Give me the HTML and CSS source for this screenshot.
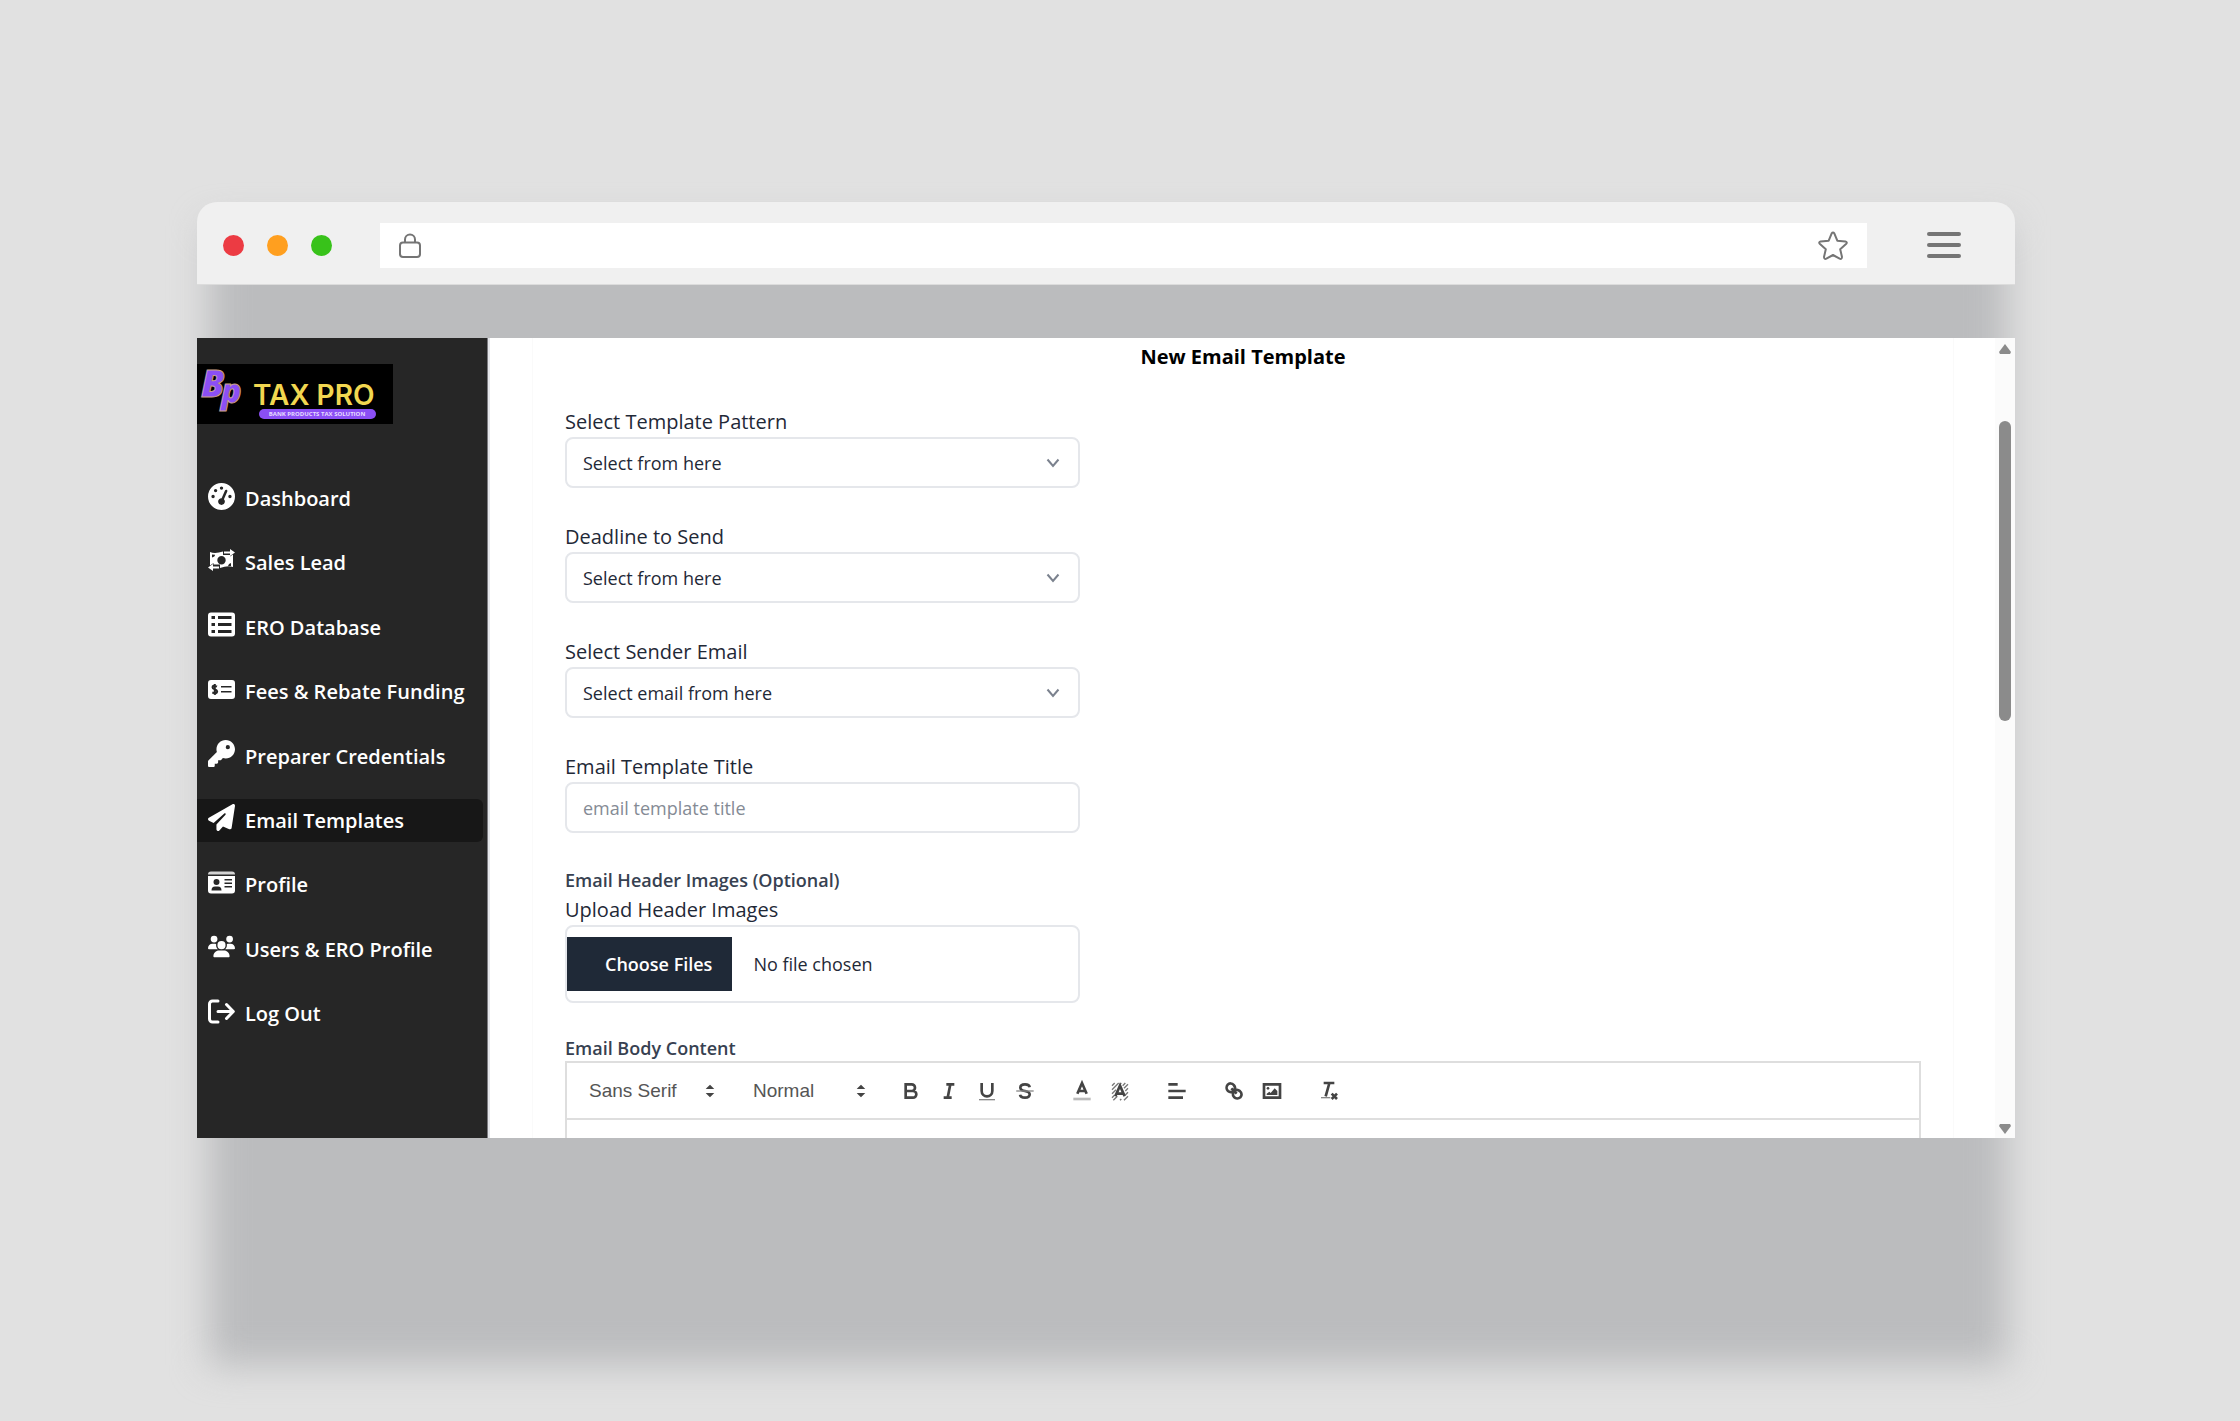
FILE: index.html
```html
<!DOCTYPE html>
<html lang="en">
<head>
<meta charset="utf-8">
<meta name="viewport" content="width=device-width, initial-scale=1">
<title>New Email Template</title>
<link rel="stylesheet" href="styles.css">
</head>
<body>
<div class="window">
  <header class="chrome">
    <div class="lights"><span class="light red"></span><span class="light amber"></span><span class="light green"></span></div>
    <div class="address">
      <svg class="lock" viewBox="0 0 22 25" aria-hidden="true"><path d="M6 9.500V6.500a5 5 0 0 1 10 0V9.500M4 9.500H18a3 3 0 0 1 3 3V21a3 3 0 0 1-3 3H4a3 3 0 0 1-3-3V12.500a3 3 0 0 1 3-3Z"/></svg>
      <input class="url" type="text" aria-label="Address">
      <button class="plain" type="button" aria-label="Bookmark"><svg class="star" viewBox="0 0 30 29"><path d="M13.700 2.300Q15 .5 16.300 2.300L19.300 9.700L27.400 10.400Q29.800 11.200 28 13L22.200 18.200L24 26Q23.800 28.600 21.600 27.600L15 24L8.400 27.600Q6.200 28.600 6 26L7.800 18.200L2 13Q.2 11.200 2.600 10.400L10.700 9.700Z"/></svg></button>
    </div>
    <button class="plain menu" type="button" aria-label="Menu"><span></span><span></span><span></span></button>
  </header>

  <div class="app">
    <aside class="sidebar">
      <svg class="logo" viewBox="0 0 196 60" role="img" aria-label="BP Tax Pro">
        <rect width="196" height="60" fill="#000"/>
        <text class="logo-mark" x="24" y="39" font-size="34">p</text>
        <text class="logo-mark" x="4" y="33" font-size="37">B</text>
        <text class="logo-name" x="56" y="41">TAX PRO</text>
        <rect x="62" y="45" width="117" height="10" rx="5" fill="#8b4ff5"/>
        <text class="logo-tag" x="120" y="52">BANK PRODUCTS TAX SOLUTION</text>
      </svg>
      <nav class="nav" aria-label="Main">
        <a class="item" href="#"><svg viewBox="0 0 512 512"><path d="M0 256a256 256 0 1 1 512 0A256 256 0 1 1 0 256zM288 96a32 32 0 1 0 -64 0 32 32 0 1 0 64 0zM256 416c35.300 0 64-28.700 64-64c0-17.400-6.900-33.100-18.100-44.600L366 161.700c5.300-12.100-.2-26.300-12.300-31.600s-26.300 .2-31.600 12.300L257.900 288c-.6 0-1.300 0-1.900 0c-35.300 0-64 28.700-64 64s28.700 64 64 64zM176 144a32 32 0 1 0 -64 0 32 32 0 1 0 64 0zM96 288a32 32 0 1 0 0-64 32 32 0 1 0 0 64zm352-32a32 32 0 1 0 -64 0 32 32 0 1 0 64 0z"/></svg>Dashboard</a>
        <a class="item" href="#"><svg viewBox="0 0 27 27"><path fill-rule="evenodd" d="M2 5Q7 7 15 4.500V8H22V9.500L25 7.500V20Q20 18 12 21V17.500H5.500V16L2 18.500ZM13.500 9a4.200 4.200 0 1 0 0 8.400 4.200 4.200 0 0 0 0-8.400ZM4 7.500V10.500Q7 10 7 7.800ZM23 19V16Q20.500 16.500 20 19Z"/><path d="M16 4.500H22V2L27 5.500 22 9V6.500H16ZM11 21.500H5V24L0 20.500 5 17V19.500H11Z"/></svg>Sales Lead</a>
        <a class="item" href="#"><svg viewBox="0 0 27 27"><path fill-rule="evenodd" d="M3 1.500H24a3 3 0 0 1 3 3V22.500a3 3 0 0 1-3 3H3a3 3 0 0 1-3-3V4.500a3 3 0 0 1 3-3ZM3.500 5V8H7V5ZM10 5V8H23.500V5ZM3.500 12V15H7V12ZM10 12V15H23.500V12ZM3.500 19V22H7V19ZM10 19V22H23.500V19Z"/></svg>ERO Database</a>
        <a class="item" href="#"><svg viewBox="0 0 27 27"><path fill-rule="evenodd" d="M3 4H24a3 3 0 0 1 3 3V20a3 3 0 0 1-3 3H3a3 3 0 0 1-3-3V7a3 3 0 0 1 3-3ZM13 10V11.500H23.500V10ZM13 15V16.500H23.500V15Z"/><path class="cut" d="M9 10.500Q4.500 8.500 4.500 11.200C4.500 13.500 9.200 13 9.200 15.500Q9 18.300 4.300 16.500M6.800 8V19"/></svg>Fees &amp; Rebate Funding</a>
        <a class="item" href="#"><svg viewBox="0 0 512 512"><path d="M336 352c97.200 0 176-78.800 176-176S433.200 0 336 0S160 78.800 160 176c0 18.700 2.900 36.800 8.300 53.700L7 391c-4.500 4.500-7 10.600-7 17v80c0 13.300 10.700 24 24 24h80c13.300 0 24-10.700 24-24V448h40c13.300 0 24-10.700 24-24V384h40c6.400 0 12.500-2.500 17-7l33.300-33.300c16.900 5.400 35 8.300 53.700 8.300zM376 96a40 40 0 1 1 0 80 40 40 0 1 1 0-80z"/></svg>Preparer Credentials</a>
        <a class="item active" href="#" aria-current="page"><svg viewBox="0 0 512 512"><path d="M498.100 5.600c10.100 7 15.400 19.100 13.500 31.200l-64 416c-1.500 9.700-7.400 18.200-16 23s-18.900 5.400-28 1.600L284 427.700l-68.500 74.100c-8.900 9.700-22.900 12.900-35.200 8.100S160 493.200 160 480V396.400c0-4 1.500-7.800 4.200-10.700L331.800 202.800c5.800-6.300 5.600-16-.4-22s-15.700-6.400-22-.7L106 360.800 17.700 316.600C7.100 311.300 .3 300.700 0 288.900s5.900-22.800 16.100-28.700l448-256c10.700-6.100 23.900-5.500 34 1.400z"/></svg>Email Templates</a>
        <a class="item" href="#"><svg viewBox="0 0 27 27"><path opacity=".8" d="M0 5.500Q0 2.500 3 2.500H24Q27 2.500 27 5.500Z"/><path fill-rule="evenodd" d="M0 7H27V21.500a3 3 0 0 1-3 3H3a3 3 0 0 1-3-3ZM8.500 10a3 3 0 1 0 0 6 3 3 0 0 0 0-6ZM3.500 21.500H13.500Q13.500 17.500 10 17.500H7Q3.500 17.500 3.500 21.500ZM16.500 10V11.500H24V10ZM16.500 13.500V15H24V13.500ZM16.500 17V18.500H24V17Z"/></svg>Profile</a>
        <a class="item" href="#"><svg viewBox="0 0 640 512"><path d="M144 0a80 80 0 1 1 0 160A80 80 0 1 1 144 0zM512 0a80 80 0 1 1 0 160A80 80 0 1 1 512 0zM0 298.700C0 239.800 47.800 192 106.700 192h42.700c15.900 0 31 3.500 44.600 9.700c-1.300 7.200-1.900 14.700-1.900 22.300c0 38.200 16.800 72.500 43.300 96H21.300C9.600 320 0 310.400 0 298.700zM405.300 320h-.7c26.600-23.500 43.300-57.800 43.300-96c0-7.600-.7-15-1.900-22.300c13.600-6.300 28.700-9.700 44.600-9.700h42.700C592.200 192 640 239.800 640 298.700c0 11.800-9.600 21.300-21.300 21.300H405.300zM224 224a96 96 0 1 1 192 0 96 96 0 1 1 -192 0zM128 485.300C128 411.700 187.700 352 261.300 352H378.700C452.300 352 512 411.700 512 485.300c0 14.700-11.900 26.700-26.700 26.700H154.700c-14.700 0-26.700-11.900-26.700-26.700z"/></svg>Users &amp; ERO Profile</a>
        <a class="item" href="#"><svg viewBox="0 0 27 27"><path class="line" d="M10 3H4.500A3 3 0 0 0 1.500 6V21A3 3 0 0 0 4.500 24H10M10 13.500H24M18.500 6.500L25.300 13.500 18.500 20.500"/></svg>Log Out</a>
      </nav>
    </aside>

    <main class="main">
      <form class="card">
        <h1>New Email Template</h1>
        <div class="field">
          <label for="pattern">Select Template Pattern</label>
          <div class="pick"><select class="control" id="pattern"><option>Select from here</option></select><svg viewBox="0 0 14 10"><path d="M1.500 1.500L7 8L12.500 1.500"/></svg></div>
        </div>
        <div class="field">
          <label for="deadline">Deadline to Send</label>
          <div class="pick"><select class="control" id="deadline"><option>Select from here</option></select><svg viewBox="0 0 14 10"><path d="M1.500 1.500L7 8L12.500 1.500"/></svg></div>
        </div>
        <div class="field">
          <label for="sender">Select Sender Email</label>
          <div class="pick"><select class="control" id="sender"><option>Select email from here</option></select><svg viewBox="0 0 14 10"><path d="M1.500 1.500L7 8L12.500 1.500"/></svg></div>
        </div>
        <div class="field">
          <label for="title">Email Template Title</label>
          <input class="control" id="title" type="text" placeholder="email template title">
        </div>
        <div class="upload">
          <h2>Email Header Images (Optional)</h2>
          <div class="field">
            <label for="images">Upload Header Images</label>
            <input class="file" id="images" type="file" multiple>
          </div>
        </div>
        <h2>Email Body Content</h2>
        <div class="editor">
          <div class="toolbar" role="toolbar" aria-label="Formatting">
            <div class="fmt font"><select aria-label="Font"><option>Sans Serif</option></select><svg viewBox="0 0 18 18"><path d="M7 11L9 13 11 11ZM7 7L9 5 11 7Z"/></svg></div>
            <div class="fmt size"><select aria-label="Heading"><option>Normal</option></select><svg viewBox="0 0 18 18"><path d="M7 11L9 13 11 11ZM7 7L9 5 11 7Z"/></svg></div>
            <div class="group">
              <button type="button" aria-label="Bold"><svg viewBox="0 0 18 18"><path class="s" d="M5 4H9.500A2.500 2.500 0 0 1 12 6.500 2.500 2.500 0 0 1 9.500 9H5ZM5 9H10.500A2.500 2.500 0 0 1 13 11.500 2.500 2.500 0 0 1 10.500 14H5Z"/></svg></button>
              <button type="button" aria-label="Italic"><svg viewBox="0 0 18 18"><path class="s" d="M7 4H13M5 14H11M8 14L10 4"/></svg></button>
              <button type="button" aria-label="Underline"><svg viewBox="0 0 18 18"><path class="s" d="M5 3V9a4 4 0 0 0 4 4 4 4 0 0 0 4-4V3"/><path class="s t" d="M3 15.500H15"/></svg></button>
              <button type="button" aria-label="Strike"><svg viewBox="0 0 18 18"><path class="s" d="M12.500 6.200C12.300 4.700 11 4 9 4 6.800 4 5.500 5 5.500 6.500 5.500 8 7 8.600 9 9S12.500 10 12.500 11.500C12.500 13 11.200 14 9 14 7 14 5.500 13.300 5.300 11.800"/><path class="s t" d="M2.500 9H15.500"/></svg></button>
            </div>
            <div class="group">
              <button type="button" aria-label="Text colour"><svg viewBox="0 0 18 18"><path class="s" d="M5.500 11L9 3 12.500 11M6.500 9H11.500"/><path class="s bar" d="M2.500 15H15.500"/></svg></button>
              <button type="button" aria-label="Background colour"><svg viewBox="0 0 18 18"><path class="s hatch" d="M3 5L5 3M3 8L8 3M3 11L6 8M3 14L5 12M4 16L7 13M10 3L9 4M13 3L11 5M15 4L12 7M15 7L13 9M15 10L13 12M15 13L12 16M10 15L9 16"/><path class="s" d="M5.500 13L9 5 12.500 13M6.500 11H11.500"/></svg></button>
            </div>
            <div class="group">
              <button type="button" aria-label="Align"><svg viewBox="0 0 18 18"><path class="s" d="M2.500 4H9.500M2.500 9H15.500M2.500 14H13.500"/></svg></button>
            </div>
            <div class="group">
              <button type="button" aria-label="Link"><svg viewBox="0 0 18 18"><path class="s" d="M7 7L11 11M8.900 4.577A3.476 3.476 0 0 1 9.300 8.500C8.100 10 6 10.300 4.500 9A3.500 3.500 0 0 1 4.300 4.200C5.600 2.900 7.500 3.100 8.900 4.577ZM13.423 9.100A3.476 3.476 0 0 0 9.500 8.700C8 9.900 7.700 12 9 13.500A3.500 3.500 0 0 0 13.800 13.700C15.100 12.400 14.900 10.500 13.423 9.100Z"/></svg></button>
              <button type="button" aria-label="Image"><svg viewBox="0 0 18 18"><path class="s" d="M3 4H15V14H3Z"/><circle cx="6" cy="7" r="1"/><path d="M5 12V11L7 9.500 8 10.500 11 7 13 9V12Z"/></svg></button>
            </div>
            <div class="group">
              <button type="button" aria-label="Clear formatting"><svg viewBox="0 0 18 18"><path class="s" d="M5 3H13M6.500 13L9.300 3"/><path class="s t" d="M3 14H10"/><path class="s" d="M11 11L15 15M15 11L11 15"/></svg></button>
            </div>
          </div>
          <div class="body" contenteditable="true" role="textbox" aria-label="Email Body Content"></div>
        </div>
      </form>
      <div class="scroll" aria-hidden="true"><span class="up"></span><span class="thumb"></span><span class="down"></span></div>
    </main>
  </div>
</div>
</body>
</html>
```
FILE: styles.css
```css
* { box-sizing: border-box; }

body {
  margin: 0;
  min-height: 100vh;
  display: flex;
  flex-direction: column;
  padding: 202px 225px 56px 197px;
  background: #e1e1e1;
  font-family: "Open Sans", "Noto Sans", sans-serif;
  color: #1f2937;
}

h1, h2 { margin: 0; }
button, input, select { font: inherit; color: inherit; }

/* browser window and its soft backdrop */
.window {
  flex: 1;
  position: relative;
  display: flex;
  flex-direction: column;
  padding-bottom: 227px;
}
.window::before {
  content: "";
  position: absolute;
  inset: 24px 8px 0 12px;
  background: #bbbcbe;
  filter: blur(18px);
}
.chrome {
  position: relative;
  height: 83px;
  margin-bottom: 53px;
  padding: 4px 54px 0 26px;
  display: flex;
  align-items: center;
  background: #f0f0f0;
  border-bottom: 1px solid #dcdcdc;
  border-radius: 20px 20px 0 0;
}
.lights { display: flex; gap: 23px; margin-right: 48px; }
.light { width: 21px; height: 21px; border-radius: 50%; }
.red { background: #ec3b43; }
.amber { background: #ff9f1f; }
.green { background: #38c21a; }
.address {
  flex: 1;
  height: 45px;
  display: flex;
  align-items: center;
  gap: 12px;
  padding: 0 19px;
  background: #fff;
}
.lock { width: 22px; height: 25px; }
.star { display: block; width: 30px; height: 29px; }
.lock path, .star path { fill: none; stroke: #757575; stroke-width: 2; stroke-linejoin: round; }
.url { flex: 1; border: 0; outline: 0; background: none; }
.plain { padding: 0; border: 0; background: none; }
.menu { width: 34px; margin-left: 60px; display: grid; gap: 7px; }
.menu span { height: 4px; border-radius: 2px; background: #757575; }

.app { position: relative; flex: 1; display: flex; min-height: 0; }

/* sidebar */
.sidebar {
  flex: none;
  width: 291px;
  display: flex;
  flex-direction: column;
  padding: 26px 0 103px;
  background: #262626;
  border-right: 1px solid #7b7b80;
}
.logo { width: 196px; height: 60px; margin-bottom: 53px; }
.logo-mark {
  font-family: "Open Sans", sans-serif;
  font-weight: 800;
  font-style: italic;
  fill: #8b4ff5;
  stroke: #c9a08a;
  stroke-width: 1;
}
.logo-name { font: 600 28px Inter, sans-serif; fill: #f2d750; }
.logo-tag { font: 700 6px "Open Sans", sans-serif; fill: #e6dcff; text-anchor: middle; }
.nav { flex: 1; display: flex; flex-direction: column; justify-content: space-between; }
.item {
  display: flex;
  align-items: center;
  gap: 10px;
  height: 43px;
  margin-right: 4px;
  padding-left: 11px;
  border-radius: 0 6px 6px 0;
  color: #fff;
  font-size: 20px;
  font-weight: 600;
  text-decoration: none;
  white-space: nowrap;
}
.item.active { background: #171717; }
.item svg { width: 27px; height: 27px; margin-bottom: 5px; fill: #fff; }
.item .cut { fill: none; stroke: #262626; stroke-width: 2; }
.item .line { fill: none; stroke: #fff; stroke-width: 3; stroke-linecap: round; stroke-linejoin: round; }

/* form */
.main {
  flex: 1;
  min-width: 0;
  display: flex;
  overflow: hidden;
  background: #fff;
  border-left: 2px solid #e5e7eb;
}
.card {
  flex: 1;
  min-width: 0;
  display: flex;
  flex-direction: column;
  margin: 0 41px 0 42px;
  padding: 6px 32px 0;
  border: solid #fafafa;
  border-width: 0 1px;
}
h1 { margin-bottom: 37px; font-size: 20px; line-height: 26px; font-weight: 700; text-align: center; color: #000; }
h2 { font-size: 18px; line-height: 26px; font-weight: 600; color: #374151; }
.field { width: 38%; display: flex; flex-direction: column; margin-bottom: 34px; }
.field label { font-size: 20px; line-height: 30px; }
.control {
  width: 100%;
  height: 51px;
  padding: 0 16px;
  appearance: none;
  background: #fff;
  border: 2px solid #e5e7eb;
  border-radius: 8px;
  font-size: 18px;
}
.control::placeholder { color: #858b95; }
.pick, .fmt { display: grid; align-items: center; }
.pick > *, .fmt > * { grid-area: 1 / 1; }
.pick svg {
  justify-self: end;
  width: 14px;
  height: 10px;
  margin-right: 20px;
  fill: none;
  stroke: #7b828e;
  stroke-width: 2;
  pointer-events: none;
}
.upload h2 { margin-bottom: 2px; }
.upload .field { margin-bottom: 32px; }
.file {
  height: 78px;
  padding: 10px 0;
  border: 2px solid #e5e7eb;
  border-radius: 8px;
  font-size: 18px;
}
.file::file-selector-button {
  height: 54px;
  margin-right: 21px;
  padding: 0 20px 0 38px;
  border: 0;
  background: #1f2937;
  color: #fff;
  font: inherit;
  font-weight: 600;
}

/* rich text editor */
.editor { flex: 1; display: flex; flex-direction: column; border: 2px solid #dedede; border-bottom: 0; color: #444; }
.toolbar {
  height: 57px;
  display: flex;
  align-items: center;
  gap: 19px;
  padding: 0 10px;
  border-bottom: 2px solid #dedede;
}
.fmt select {
  appearance: none;
  padding: 0 12px;
  border: 0;
  background: none;
  font: 500 19px/30px "Liberation Sans", Arial, sans-serif;
  color: #555;
}
.font { width: 145px; }
.size { width: 132px; }
.fmt svg { justify-self: end; width: 24px; height: 24px; fill: #444; stroke: #444; stroke-width: 1; pointer-events: none; }
.group { display: flex; }
.group button { width: 38px; height: 32px; padding: 0; border: 0; background: none; display: grid; place-items: center; }
.group svg { width: 24px; height: 24px; fill: #444; }
.s { fill: none; stroke: #444; stroke-width: 2; }
.t { stroke: #888; stroke-width: 1; }
.bar { stroke: #bbb; }
.hatch { stroke: #777; stroke-width: 1; }
.body { flex: 1; outline: 0; font-size: 14px; line-height: 16px; }

/* scrollbar */
.scroll { flex: none; width: 20px; display: flex; flex-direction: column; align-items: center; padding: 6px 0 4px; background: #fbfbfb; }
.up, .down { width: 12px; height: 10px; background: #8b8b8b; }
.up { clip-path: polygon(50% 0, 100% 80%, 92% 100%, 8% 100%, 0 80%); }
.down { margin-top: auto; clip-path: polygon(8% 0, 92% 0, 100% 20%, 50% 100%, 0 20%); }
.thumb { width: 12px; height: 38%; margin-top: 67px; border-radius: 6px; background: #8b8b8b; }
```
